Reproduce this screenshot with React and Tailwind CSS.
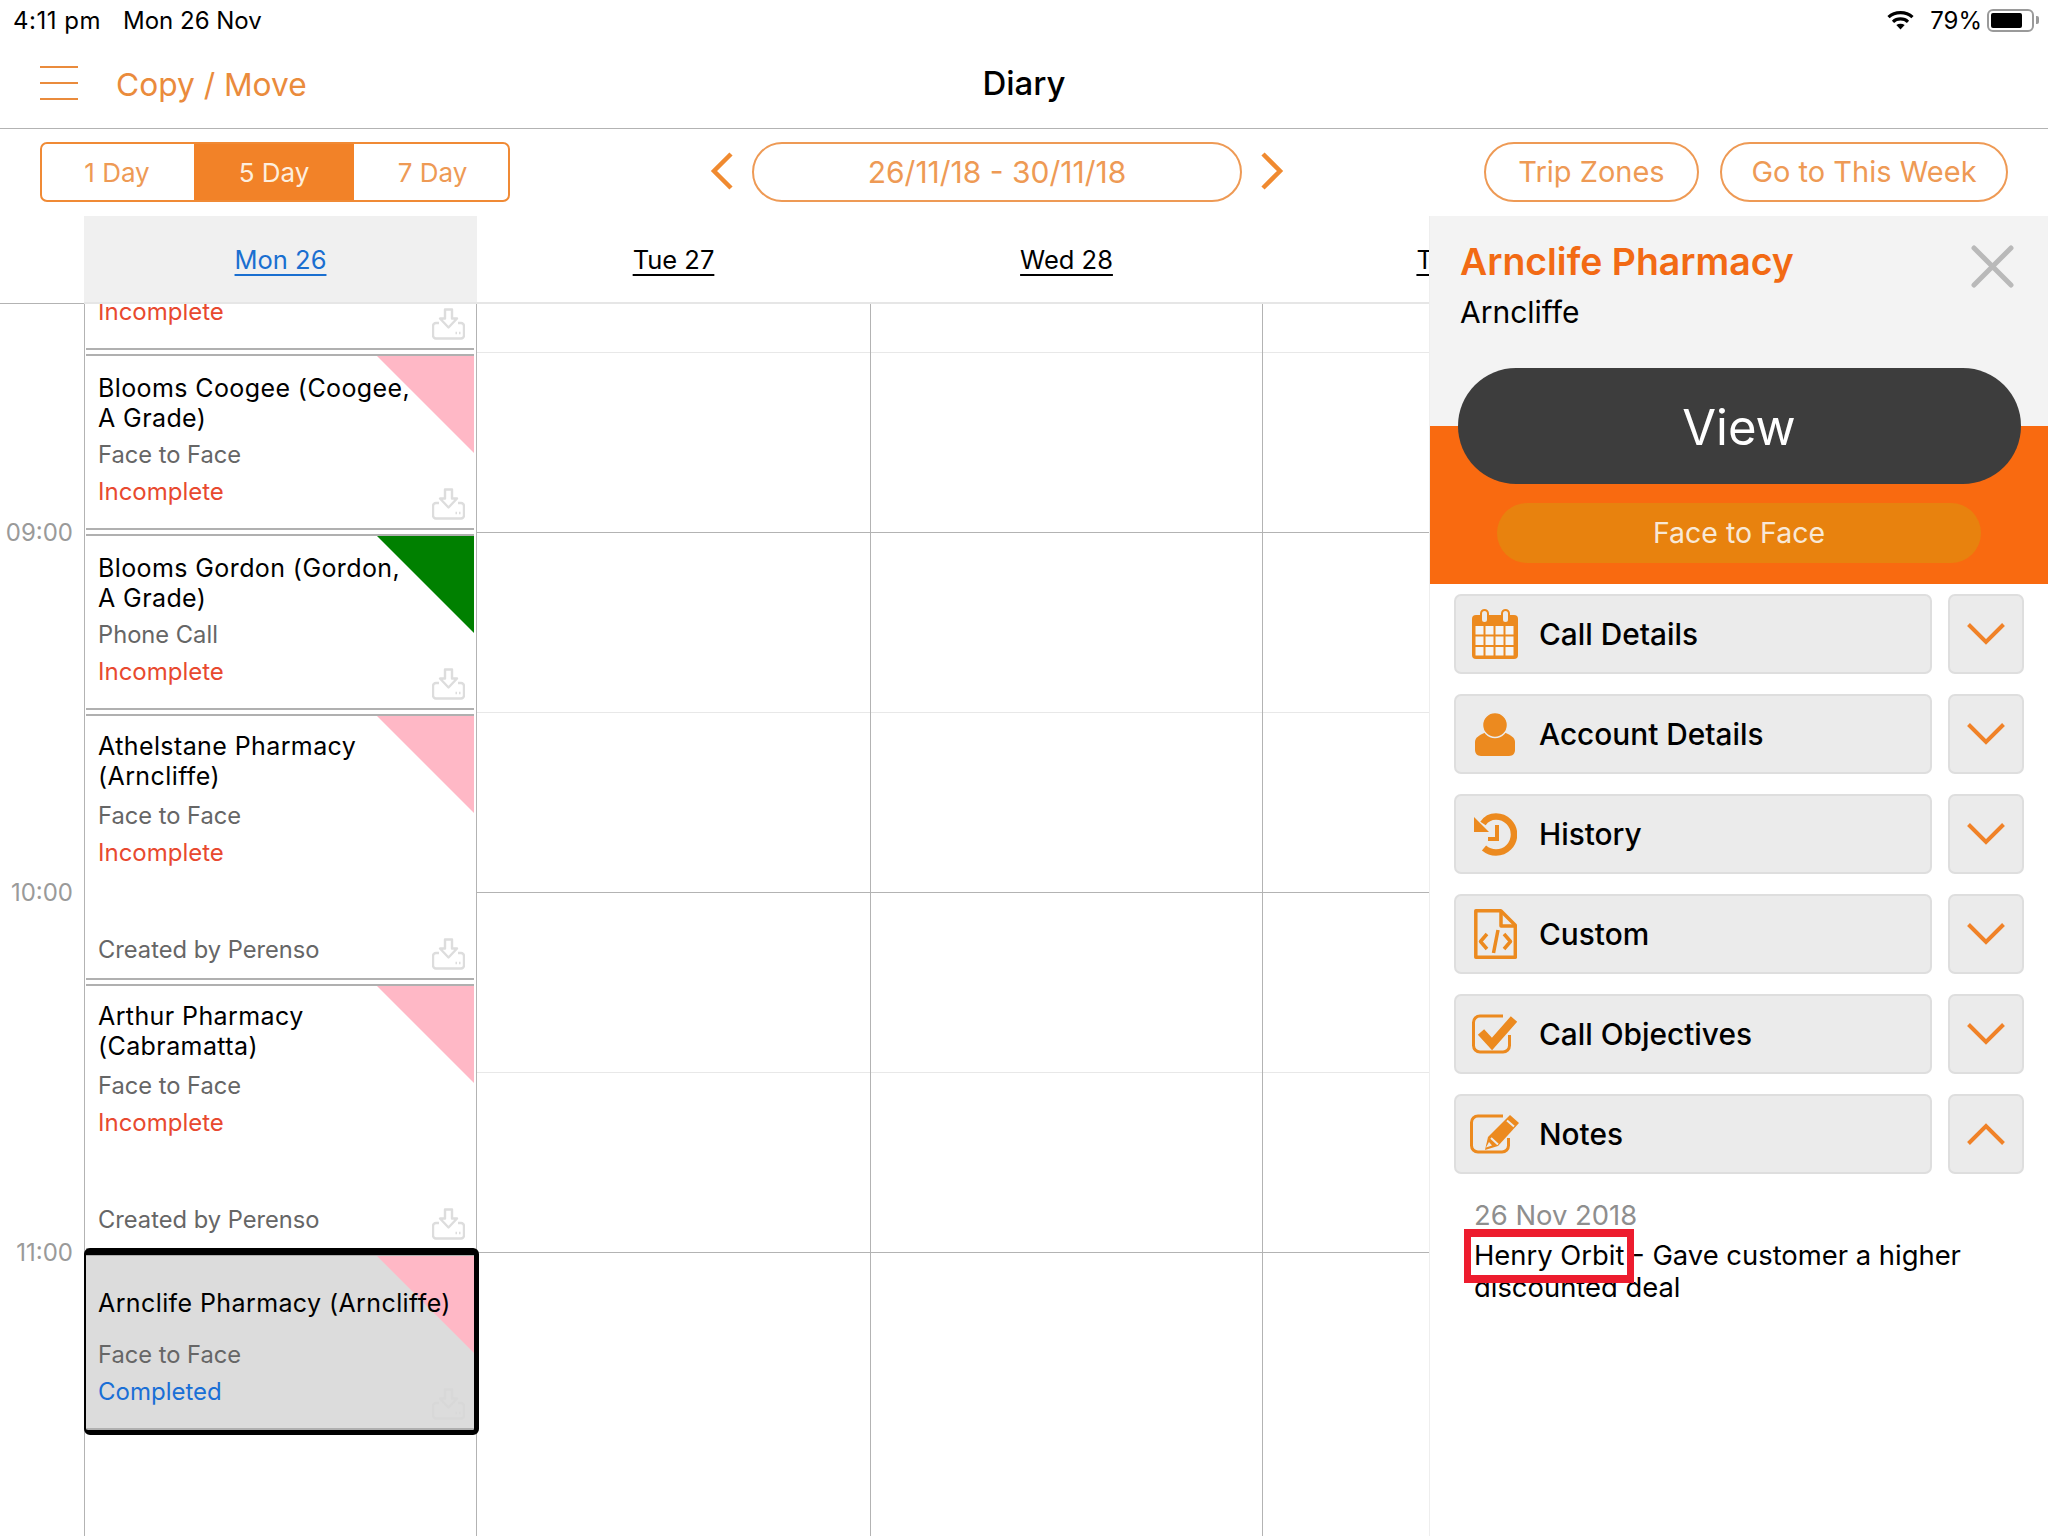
const ORANGE = "#ec8a1f";

function Wifi() {
  return (
    <svg width="27" height="20" viewBox="0 0 27 20" fill="none" stroke="#000" strokeWidth="3.2">
      <path d="M1.5 7.2C8 1 19 1 25.5 7.2" />
      <path d="M6 11.8c4-3.8 11-3.8 15 0" />
      <path d="M13.5 19.5l-4.2-4.6c2.4-1.6 6-1.6 8.4 0z" fill="#000" stroke="none" />
    </svg>
  );
}

function StatusBar() {
  return (
    <div className="h-[40px] shrink-0 flex items-center pl-[13px] pr-[9px] text-[24px] text-black">
      <span className="w-[110px] tracking-[0.5px] pt-[1px]">4:11 pm</span>
      <span className="pt-[1px]">Mon 26 Nov</span>
      <div className="ml-auto flex items-center">
        <Wifi />
        <span className="ml-[16px] pt-[1px]">79%</span>
        <div className="ml-[5px] w-[47px] h-[23px] border-2 border-[#9a9a9a] rounded-[6px] p-[2px]">
          <div className="w-[31px] h-full bg-black rounded-[2px]" />
        </div>
        <div className="ml-[2px] w-[3px] h-[8px] bg-[#9a9a9a] rounded-r-[2px]" />
      </div>
    </div>
  );
}

function NavBar() {
  return (
    <div className="relative h-[89px] shrink-0 flex items-center border-b border-[#b3b3b3] pl-[40px]">
      <div className="w-[38px] h-[34px] flex flex-col justify-between -mt-[2px]">
        <div className="h-[2px] bg-[#ea8b3c]" />
        <div className="h-[2px] bg-[#ea8b3c]" />
        <div className="h-[2px] bg-[#ea8b3c]" />
      </div>
      <span className="ml-[38px] mt-[1px] text-[31.7px] text-[#ea8b3c]">Copy / Move</span>
      <span className="absolute left-0 right-0 text-center text-[33px] font-medium text-black pointer-events-none">Diary</span>
    </div>
  );
}

function Chevron({ dir }) {
  return (
    <svg width="24" height="38" viewBox="0 0 24 38" fill="none" stroke="#f08a30" strokeWidth="4.5">
      <path d={dir === "left" ? "M21 2L4 19l17 17" : "M3 2l17 17L3 36"} />
    </svg>
  );
}

function Toolbar() {
  const pill = "h-[60px] border-2 border-[#ee9a55] rounded-[30px] flex items-center justify-center text-[#ee9a55]";
  return (
    <div className="h-[87px] shrink-0 flex pt-[13px] pl-[40px]">
      <div className="w-[470px] h-[60px] border-2 border-[#f08a35] rounded-[7px] flex text-[26px] text-[#ee9a55] overflow-hidden">
        <div className="w-[152px] flex items-center justify-center pr-[2px]">1 Day</div>
        <div className="w-[160px] flex items-center justify-center bg-[#f28228] text-[#fdeede]">5 Day</div>
        <div className="flex-1 flex items-center justify-center pl-[3px]">7 Day</div>
      </div>
      <div className="ml-[200px] mt-[10px] mr-[18px]"><Chevron dir="left" /></div>
      <div className={`w-[490px] text-[30px] ${pill}`}>26/11/18 - 30/11/18</div>
      <div className="ml-[18px] mt-[10px]"><Chevron dir="right" /></div>
      <div className={`ml-[200px] w-[215px] text-[29px] ${pill}`}>Trip Zones</div>
      <div className={`ml-[21px] w-[288px] text-[29px] ${pill}`}>Go to This Week</div>
    </div>
  );
}

function DownloadIcon({ color = "#dddddd" }) {
  return (
    <svg width="33" height="32" viewBox="0 0 33 32" fill="none" stroke={color} strokeWidth="2.4" strokeLinejoin="round">
      <path d="M13 1.5h7v9h5l-8.500 9-8.500-9h5z" />
      <path d="M7 15H4a3 3 0 0 0-3 3v9.500a3 3 0 0 0 3 3h25a3 3 0 0 0 3-3V18a3 3 0 0 0-3-3h-3" />
      <path d="M23.500 25h1.500M27 25h1.500" />
    </svg>
  );
}

function Corner({ color }) {
  return (
    <div
      className="absolute top-0 right-0 w-[97px] h-[97px] [clip-path:polygon(0_0,100%_0,100%_100%)]"
      style={{ backgroundColor: color }}
    />
  );
}

function VisitCard({ name, type, status = "Incomplete", corner = "#ffb8c6", createdBy, tall, selected }) {
  const statusColor = status === "Completed" ? "text-[#1a6fd6]" : "text-[#e8492f]";
  return (
    <div className={`relative shrink-0 flex flex-col border-y-2 border-[#b0b0b0] pl-[12px] pr-[13px] pb-[13px] text-[24px] leading-[30px] ${tall ? "h-[266px] pt-[15px]" : "h-[176px] pt-[17px]"} ${selected ? "bg-[#dcdcdc]" : "bg-white"}`}>
      <Corner color={corner} />
      <div className="relative h-[60px] flex items-center text-black text-[25px] tracking-[0.4px] whitespace-pre-line">{name}</div>
      <div className={`relative text-[#666666] text-[23.7px] ${tall ? "mt-[10px]" : "mt-[7px]"}`}>{type}</div>
      <div className={`relative mt-[7px] ${statusColor}`}>{status}</div>
      {createdBy && <div className="mt-auto text-[#666666] text-[23.7px]">Created by {createdBy}</div>}
      <div className="absolute bottom-[8px] right-[9px]">
        <DownloadIcon color={selected ? "#d8d8d8" : "#dddddd"} />
      </div>
      {selected && (
        <div className="absolute -top-[8px] -left-[2px] -right-[5px] -bottom-[7px] rounded-[6px] border-black border-t-[7px] border-l-[2px] border-r-[5px] border-b-[5px]" />
      )}
    </div>
  );
}

function MonColumn() {
  return (
    <div className="w-[393px] shrink-0 flex flex-col gap-[4px] border-x border-[#b3b3b3] pl-[1px] pr-[2px]">
      <div className="relative h-[46px] shrink-0 overflow-hidden border-b-2 border-[#b0b0b0] pl-[12px] pr-[13px] text-[24px] leading-[30px] text-[#e8492f]">
        <div className="-mt-[7px]">Incomplete</div>
        <div className="absolute bottom-[8px] right-[9px]"><DownloadIcon /></div>
      </div>
      <VisitCard name={"Blooms Coogee (Coogee,\nA Grade)"} type="Face to Face" />
      <VisitCard name={"Blooms Gordon (Gordon,\nA Grade)"} type="Phone Call" corner="#008000" />
      <VisitCard name={"Athelstane Pharmacy\n(Arncliffe)"} type="Face to Face" createdBy="Perenso" tall />
      <VisitCard name={"Arthur Pharmacy\n(Cabramatta)"} type="Face to Face" createdBy="Perenso" tall />
      <VisitCard name="Arnclife Pharmacy (Arncliffe)" type="Face to Face" status="Completed" selected />
    </div>
  );
}

function EmptyDay({ width }) {
  const rows = [180, 180, 180, 180, 180];
  return (
    <div className={`shrink-0 border-r border-[#b3b3b3] ${width}`}>
      <div className="h-[49px] border-b border-[#e8e8e8]" />
      {rows.map((h, i) => (
        <div key={i} className={`h-[180px] border-b ${i % 2 === 0 ? "border-[#b3b3b3]" : "border-[#e8e8e8]"}`} />
      ))}
    </div>
  );
}

function Calendar() {
  const hdr = "shrink-0 flex items-center justify-center border-b-2 border-[#e6e6e6] pt-[2px] text-[25.5px] underline underline-offset-[5px] decoration-[2px]";
  return (
    <div className="w-[1429px] shrink-0 flex flex-col overflow-hidden">
      <div className="relative z-10 h-[88px] shrink-0 flex text-black">
        <div className="w-[84px] shrink-0 border-b border-[#b3b3b3]" />
        <div className={`w-[393px] bg-[#f0f0f0] text-[#1a6fd0] ${hdr}`}>Mon 26</div>
        <div className={`w-[394px] pr-[1px] ${hdr}`}>Tue 27</div>
        <div className={`w-[392px] pr-[1px] ${hdr}`}>Wed 28</div>
        <div className={`w-[392px] ${hdr}`}>Thu 29</div>
      </div>
      <div className="flex flex-1">
        <div className="w-[84px] shrink-0 pt-[217px] pr-[11px] text-right text-[24px] leading-[24px] text-[#9a9a9a]">
          <div className="h-[360px]">09:00</div>
          <div className="h-[360px]">10:00</div>
          <div className="h-[360px]">11:00</div>
        </div>
        <MonColumn />
        <EmptyDay width="w-[394px]" />
        <EmptyDay width="w-[392px]" />
        <EmptyDay width="w-[392px]" />
      </div>
    </div>
  );
}

function CalendarIcon() {
  const cells = [];
  for (let r = 0; r < 3; r++) {
    for (let c = 0; c < 4; c++) {
      cells.push(<rect key={`${r}-${c}`} x={3.5 + c * 10} y={17 + r * 10.500} width="8" height="8.500" fill="#f4f4f4" />);
    }
  }
  return (
    <svg width="46" height="50" viewBox="0 0 46 50">
      <rect x="0" y="6" width="46" height="44" rx="4" fill={ORANGE} />
      <rect x="9" y="1" width="7" height="13" rx="3.500" fill="#ebebeb" stroke={ORANGE} strokeWidth="2" />
      <rect x="30" y="1" width="7" height="13" rx="3.500" fill="#ebebeb" stroke={ORANGE} strokeWidth="2" />
      {cells}
    </svg>
  );
}

function PersonIcon() {
  return (
    <svg width="40" height="43" viewBox="0 0 40 43" fill={ORANGE}>
      <path d="M0 37v-8c0-5 6-8 12-10h16c6 2 12 5 12 10v8c0 3-2 6-6 6H6c-4 0-6-3-6-6z" />
      <circle cx="20" cy="12" r="12.500" stroke="#ebebeb" strokeWidth="1.500" />
    </svg>
  );
}

function HistoryIcon() {
  return (
    <svg width="43" height="43" viewBox="0 0 43 43" fill="none" stroke={ORANGE}>
      <path d="M9 10.500C12 6 17 3.500 22 3.500c10 0 18 8 18 18s-8 18-18 18c-5 0-9-2-12-4.500" strokeWidth="6.500" />
      <path d="M0 4l15 15H0z" fill={ORANGE} stroke="none" />
      <path d="M23 12v14h-9" strokeWidth="4" />
    </svg>
  );
}

function CodeFileIcon() {
  return (
    <svg width="43" height="50" viewBox="0 0 43 50" fill="none" stroke={ORANGE} strokeWidth="3.500" strokeLinejoin="round">
      <path d="M1.800 1.800h25l14.500 14.500v31.900H1.800z" />
      <path d="M27 2v15h14" />
      <path d="M13 25l-6.500 7.500L13 40M30 25l6.500 7.500L30 40M24 21l-4.500 23" />
    </svg>
  );
}

function CheckIcon() {
  return (
    <svg width="46" height="40" viewBox="0 0 46 40" fill="none" stroke={ORANGE}>
      <path d="M31 2H8a6.500 6.500 0 0 0-6.500 6.500v23A6.500 6.500 0 0 0 8 38h23a6.500 6.500 0 0 0 6.500-6.500V21" strokeWidth="3" />
      <path d="M9 18l11 12L42 5" strokeWidth="8.500" />
    </svg>
  );
}

function NoteIcon() {
  return (
    <svg width="50" height="40" viewBox="0 0 50 40" fill="none" stroke={ORANGE}>
      <path d="M33 2H8a6.500 6.500 0 0 0-6.500 6.500v23A6.500 6.500 0 0 0 8 38h24a6.500 6.500 0 0 0 6.500-6.500V24" strokeWidth="3" />
      <path d="M40 1l9 8-21 23-13 4 3-13z" fill={ORANGE} stroke="none" />
      <path d="M21 24l7 6.500M37 6.500l7 6" stroke="#ebebeb" strokeWidth="2" />
      <path d="M19 28l3 3.500-6 2z" fill="#ebebeb" stroke="none" />
    </svg>
  );
}

function Accordion({ icon, label, open }) {
  return (
    <div className="flex h-[80px] gap-[16px]">
      <div className="w-[478px] flex items-center bg-[#ebebeb] border-2 border-[#dedede] rounded-[7px]">
        <div className="w-[83px] shrink-0 flex justify-center pr-[5px]">{icon}</div>
        <span className="text-[29.8px] font-medium text-black pt-[1px]">{label}</span>
      </div>
      <div className="w-[76px] flex items-center justify-center bg-[#ebebeb] border-2 border-[#dedede] rounded-[7px]">
        <svg width="38" height="22" viewBox="0 0 38 22" fill="none" stroke="#f08228" strokeWidth="4">
          <path d={open ? "M1.500 20.500L19 3l17.500 17.500" : "M1.500 1.500L19 19 36.500 1.500"} />
        </svg>
      </div>
    </div>
  );
}

function DetailPanel() {
  return (
    <div className="w-[619px] shrink-0 flex flex-col bg-white border-l border-[#eeeeee]">
      <div className="relative h-[210px] shrink-0 bg-[#f3f3f3] pl-[30px] pt-[21px]">
        <div className="text-[37.400px] leading-[50px] font-semibold text-[#f26a14]">Arnclife Pharmacy</div>
        <div className="mt-[5px] text-[30px] leading-[40px] text-black">Arncliffe</div>
        <svg className="absolute top-[29px] right-[34px]" width="43" height="43" viewBox="0 0 43 43" stroke="#b9b9b9" strokeWidth="5" strokeLinecap="round">
          <path d="M3 3l37 37M40 3L3 40" />
        </svg>
      </div>
      <div className="relative h-[158px] shrink-0 bg-[#f96a10] flex flex-col items-center">
        <div className="-mt-[58px] w-[563px] h-[116px] rounded-[58px] bg-[#3d3d3d] flex items-center justify-center pt-[4px] text-[49px] text-white">View</div>
        <div className="mt-[19px] w-[484px] h-[60px] rounded-[30px] bg-[#e8820e] flex items-center justify-center text-[28.5px] text-[#f8e8d6]">Face to Face</div>
      </div>
      <div className="flex flex-col gap-[20px] pt-[10px] pl-[24px]">
        <Accordion icon={<CalendarIcon />} label="Call Details" />
        <Accordion icon={<PersonIcon />} label="Account Details" />
        <Accordion icon={<HistoryIcon />} label="History" />
        <Accordion icon={<CodeFileIcon />} label="Custom" />
        <Accordion icon={<CheckIcon />} label="Call Objectives" />
        <Accordion icon={<NoteIcon />} label="Notes" open />
      </div>
      <div className="relative pt-[24px] pl-[44px] pr-[60px] text-[27.4px] leading-[32px]">
        <div className="text-[#8e8e8e] leading-[34px]">26 Nov 2018</div>
        <div className="mt-[7px] text-black">Henry Orbit - Gave customer a higher discounted deal</div>
        <div className="absolute top-[55px] left-[34px] w-[170px] h-[54px] border-x-[7px] border-y-[8px] border-[#ed1c2e]" />
      </div>
    </div>
  );
}

export default function App() {
  return (
    <div className="w-[2048px] h-[1536px] flex flex-col overflow-hidden bg-white font-['Inter',sans-serif]">
      <StatusBar />
      <NavBar />
      <Toolbar />
      <div className="flex flex-1 min-h-0">
        <Calendar />
        <DetailPanel />
      </div>
    </div>
  );
}
